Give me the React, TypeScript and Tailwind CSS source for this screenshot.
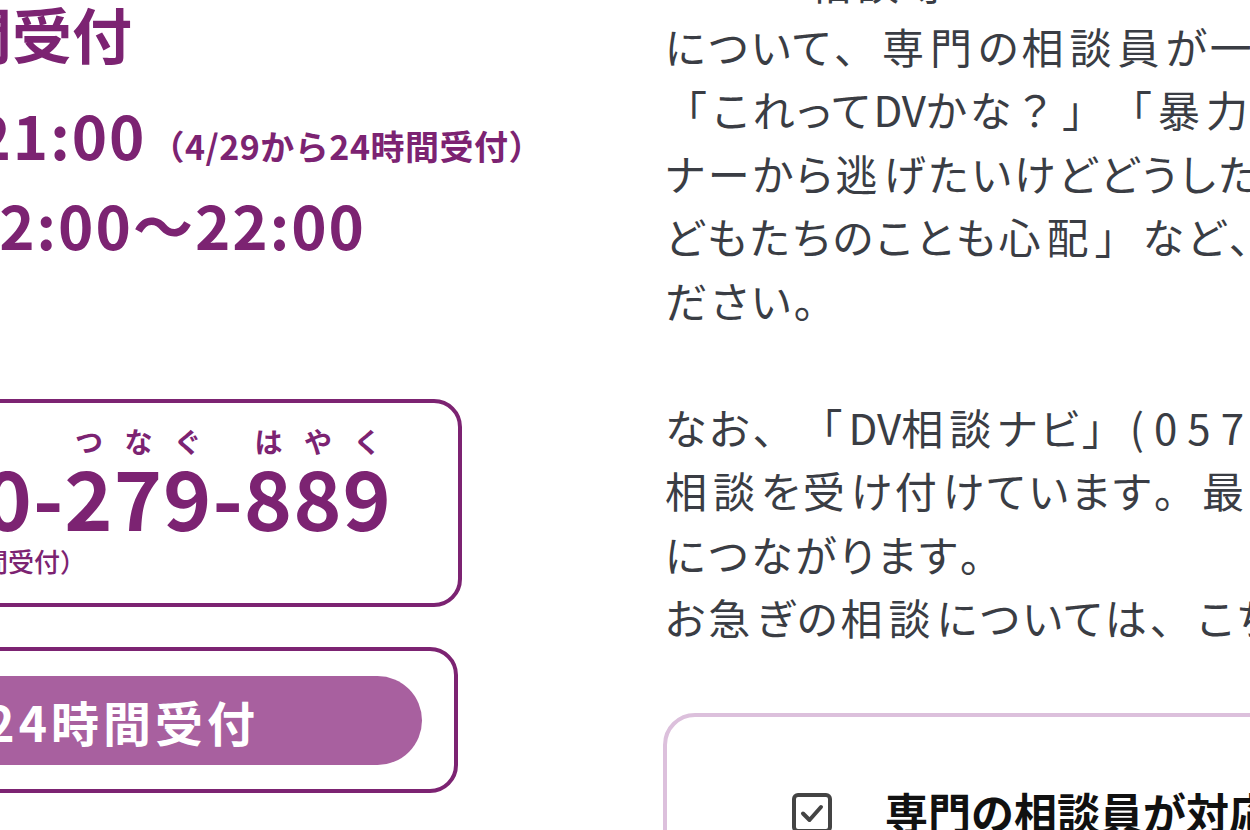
import React from "react";

const PURPLE = "text-[#7c2372]";

function PhoneNumber() {
  const chars: { c: string; k?: string }[] = [
    { c: "0" },
    { c: "1" },
    { c: "2" },
    { c: "0" },
    { c: "-" },
    { c: "2", k: "つ" },
    { c: "7", k: "な" },
    { c: "9", k: "ぐ" },
    { c: "-" },
    { c: "8", k: "は" },
    { c: "8", k: "や" },
    { c: "9", k: "く" },
  ];
  return (
    <div className="flex w-[392px] justify-end whitespace-nowrap">
      {chars.map((ch, i) => (
        <div key={i} className="flex flex-col items-center">
          <span className="h-[28px] text-[28px] font-bold leading-[28px]">{ch.k ?? "\u00a0"}</span>
          <span className="text-[82px] font-bold leading-[82px] tracking-[1px]">{ch.c}</span>
        </div>
      ))}
    </div>
  );
}

function CheckIcon() {
  return (
    <svg width="40" height="40" viewBox="0 0 40 40" className="shrink-0">
      <rect x="2" y="2" width="36" height="36" rx="4" fill="none" stroke="#444" strokeWidth="4" />
      <path d="M11 20.5 L17.5 27 L29 14" fill="none" stroke="#444" strokeWidth="4" strokeLinecap="round" strokeLinejoin="round" />
    </svg>
  );
}

const PUNCT = "、。「」（）？";

function J({ t }: { t: string }) {
  const parts: React.ReactNode[] = [];
  let i = 0;
  for (const ch of Array.from(t)) {
    if (PUNCT.includes(ch)) {
      parts.push(
        <span key={i++} className="tracking-[6px] [font-feature-settings:normal]">
          {ch}
        </span>
      );
    } else if (/[\u4e00-\u9fff]/.test(ch)) {
      parts.push(
        <span key={i++} className="tracking-[6px]">
          {ch}
        </span>
      );
    } else if (/[A-Za-z]/.test(ch)) {
      parts.push(
        <span key={i++} className="tracking-[0px]">
          {ch}
        </span>
      );
    } else if (/[0-9(]/.test(ch)) {
      parts.push(
        <span key={i++} className="tracking-[10px]">
          {ch}
        </span>
      );
    } else {
      parts.push(ch);
    }
  }
  return <div className="h-[63.5px]">{parts}</div>;
}

export default function App() {
  return (
    <div className="relative flex h-[830px] w-[1250px] overflow-hidden bg-white font-['Noto_Sans_CJK_JP','Noto_Sans',sans-serif] [text-spacing-trim:space-all]">
      {/* Left column */}
      <div className={`flex w-[665px] shrink-0 flex-col ${PURPLE}`}>
        <div className="mt-[3px] flex h-[60px] w-[132px] shrink-0 justify-end whitespace-nowrap text-[60px] font-bold leading-[60px]">
          メール相談 24時間受付
        </div>
        <div className="mt-[41px] flex w-[543px] shrink-0 items-baseline justify-end whitespace-nowrap">
          <span className="text-[60px] font-bold leading-[60px] tracking-[2px]">9:00～21:00</span>
          <span className="ml-[4px] text-[34px] font-bold leading-[34px] tracking-[0.5px]">（4/29から24時間受付）</span>
        </div>
        <div className="mt-[30px] flex w-[366px] shrink-0 justify-end whitespace-nowrap text-[60px] font-bold leading-[60px] tracking-[2px]">
          12:00～22:00
        </div>

        <div className="-ml-[300px] mt-[145px] w-[762px] shrink-0 rounded-[28px] border-4 border-[#7c2372] pb-[28px] pl-[296px] pt-[24px]">
          <PhoneNumber />
          <div className="mt-[10px] flex w-[86px] justify-end whitespace-nowrap text-[26px] font-medium leading-[28px]">
            （24時間受付）
          </div>
        </div>

        <div className="-ml-[300px] mt-[40px] w-[758px] shrink-0 rounded-[28px] border-4 border-[#7c2372] pb-[24px] pr-[32px] pt-[25px]">
          <div className="flex h-[89px] items-center justify-end whitespace-nowrap rounded-full bg-[#a8609f] pr-[163px] text-[48px] font-bold leading-[48px] tracking-[4px] text-white">
            電話相談 24時間受付
          </div>
        </div>
      </div>

      {/* Right column */}
      <div className="-mt-[50px] block flex-1 whitespace-nowrap text-[42px] leading-[63.5px] tracking-[3px] text-[#3a3d44] [font-feature-settings:'palt']">
        <div className="h-[63.5px] tracking-[6px]">　　　相談等</div>
        <J t="について、専門の相談員が一緒に考えます。" />
        <J t="「これってDVかな？」「暴力をやめてほしい」" />
        <J t="ナーから逃げたいけどどうしたらいいの？」" />
        <J t="どもたちのことも心配」など、まずはご相談く" />
        <J t="ださい。" />
        <div className="h-[63.5px]" />
        <J t="なお、「DV相談ナビ」(0570-0-55210)でも" />
        <J t="相談を受け付けています。最寄りの相談窓口" />
        <J t="につながります。" />
        <J t="お急ぎの相談については、こちら" />

        <div className="-ml-[2px] mt-[64px] h-[300px] w-[700px] rounded-[32px] border-4 border-[#dcc0dc] pl-[125px] pt-[76px] [font-feature-settings:normal]">
          <div className="flex items-start">
            <CheckIcon />
            <span className="-mt-[3px] ml-[53px] text-[43px] font-bold leading-[43px] tracking-[0px] text-[#111]">
              専門の相談員が対応します
            </span>
          </div>
        </div>
      </div>
    </div>
  );
}
